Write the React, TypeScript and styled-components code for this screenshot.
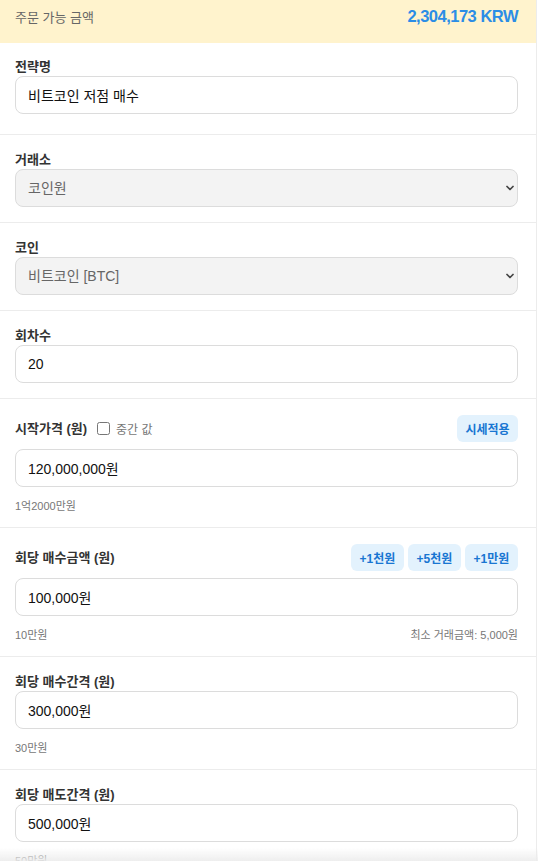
import React from "react";
import styled, { createGlobalStyle } from "styled-components";
import { ChevronDown } from "lucide-react";

const GlobalStyle = createGlobalStyle`
  html, body {
    margin: 0;
    padding: 0;
    background: #ffffff;
  }
  body {
    font-family: "Liberation Sans", "Noto Sans CJK KR", Arial, sans-serif;
    color: #222;
  }
  * { box-sizing: border-box; }
`;

const Page = styled.div`
  width: 537px;
  border-right: 1px solid #ececec;
  background: #fff;
  min-height: 100vh;
`;

const Balance = styled.div`
  height: 43px;
  background: #fff3cd;
  display: flex;
  align-items: center;
  justify-content: space-between;
  padding: 0 18px 10px 15px;
`;

const BalanceLabel = styled.span`
  font-size: 13px;
  color: #666;
`;

const BalanceValue = styled.span`
  font-size: 16.5px;
  font-weight: 700;
  color: #2b8de6;
  letter-spacing: -0.5px;
`;

const Section = styled.div<{ $first?: boolean }>`
  padding: ${(p) => (p.$first ? "15px 18px 20px 15px" : "16px 18px 15px 15px")};
  border-bottom: 1px solid #ececec;
`;

const Label = styled.label`
  display: block;
  font-size: 13px;
  line-height: 18px;
  font-weight: 700;
  color: #333;
`;

const LabelRow = styled.div`
  display: flex;
  align-items: center;
  justify-content: space-between;
  height: 27px;
  margin-bottom: 7px;
`;

const LabelGroup = styled.div`
  display: flex;
  align-items: center;
  gap: 10px;
`;

const CheckLabel = styled.label`
  display: flex;
  align-items: center;
  gap: 6px;
  font-size: 12px;
  color: #777;
`;

const Check = styled.input`
  width: 13px;
  height: 13px;
  margin: 0;
`;

const Buttons = styled.div`
  display: flex;
  gap: 4px;
`;

const ChipButton = styled.button<{ $w: number }>`
  width: ${(p) => p.$w}px;
  height: 27px;
  border: none;
  border-radius: 6px;
  background: #e3f2fd;
  color: #1976d2;
  font-family: inherit;
  font-size: 12px;
  font-weight: 700;
  padding: 0;
`;

const TextInput = styled.input`
  display: block;
  width: 100%;
  height: 38px;
  border: 1px solid #dcdcdc;
  border-radius: 8px;
  padding: 0 12px;
  font-family: inherit;
  font-size: 14px;
  color: #111;
  background: #fff;
  outline: none;
`;

const SelectWrap = styled.div`
  position: relative;
  & svg {
    position: absolute;
    right: 2px;
    top: 13px;
    pointer-events: none;
  }
`;

const Select = styled.select`
  display: block;
  width: 100%;
  height: 38px;
  appearance: none;
  border: 1px solid #dcdcdc;
  border-radius: 8px;
  padding: 0 12px;
  font-family: inherit;
  font-size: 14px;
  color: #666;
  background: #f3f3f3;
  opacity: 1;
`;

const HelpRow = styled.div`
  display: flex;
  justify-content: space-between;
  margin-top: 11px;
  font-size: 11px;
  line-height: 16px;
  color: #777;
  margin-bottom: -2px;
`;

const BottomFade = styled.div`
  position: fixed;
  left: 0;
  right: 0;
  bottom: 0;
  height: 13px;
  background: linear-gradient(to bottom, rgba(240, 240, 240, 0), rgba(236, 236, 236, 0.9));
  pointer-events: none;
`;

interface FieldProps {
  label: string;
  value: string;
  help?: string;
  helpRight?: string;
}

function AmountField({ label, value, help, helpRight }: FieldProps) {
  return (
    <Section>
      <Label>{label}</Label>
      <TextInput defaultValue={value} />
      {help && (
        <HelpRow>
          <span>{help}</span>
          {helpRight && <span>{helpRight}</span>}
        </HelpRow>
      )}
    </Section>
  );
}

export default function App() {
  return (
    <>
      <GlobalStyle />
      <Page>
        <Balance>
          <BalanceLabel>주문 가능 금액</BalanceLabel>
          <BalanceValue>2,304,173 KRW</BalanceValue>
        </Balance>

        <Section $first>
          <Label>전략명</Label>
          <TextInput defaultValue="비트코인 저점 매수" />
        </Section>

        <Section>
          <Label>거래소</Label>
          <SelectWrap>
            <Select disabled defaultValue="coinone">
              <option value="coinone">코인원</option>
            </Select>
            <ChevronDown size={12} strokeWidth={3.5} color="#444" />
          </SelectWrap>
        </Section>

        <Section>
          <Label>코인</Label>
          <SelectWrap>
            <Select disabled defaultValue="btc">
              <option value="btc">비트코인 [BTC]</option>
            </Select>
            <ChevronDown size={12} strokeWidth={3.5} color="#444" />
          </SelectWrap>
        </Section>

        <Section>
          <Label>회차수</Label>
          <TextInput defaultValue="20" />
        </Section>

        <Section>
          <LabelRow>
            <LabelGroup>
              <Label>시작가격 (원)</Label>
              <CheckLabel>
                <Check type="checkbox" />
                중간 값
              </CheckLabel>
            </LabelGroup>
            <ChipButton $w={61}>시세적용</ChipButton>
          </LabelRow>
          <TextInput defaultValue="120,000,000원" />
          <HelpRow>
            <span>1억2000만원</span>
          </HelpRow>
        </Section>

        <Section>
          <LabelRow>
            <Label>회당 매수금액 (원)</Label>
            <Buttons>
              <ChipButton $w={53}>+1천원</ChipButton>
              <ChipButton $w={53}>+5천원</ChipButton>
              <ChipButton $w={53}>+1만원</ChipButton>
            </Buttons>
          </LabelRow>
          <TextInput defaultValue="100,000원" />
          <HelpRow>
            <span>10만원</span>
            <span>최소 거래금액: 5,000원</span>
          </HelpRow>
        </Section>

        <AmountField label="회당 매수간격 (원)" value="300,000원" help="30만원" />
        <AmountField label="회당 매도간격 (원)" value="500,000원" help="50만원" />
      </Page>
      <BottomFade />
    </>
  );
}
